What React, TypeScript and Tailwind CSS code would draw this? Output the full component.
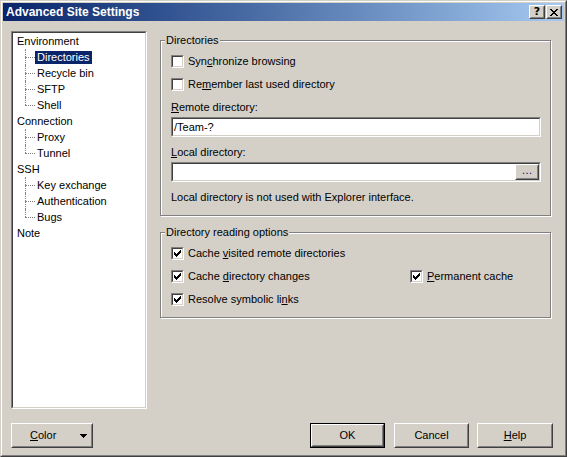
import type { ReactNode } from 'react';

const raised = 'border border-t-white border-l-white border-r-[#404040] border-b-[#404040]';
const raisedInner = 'border border-t-[#d4d0c8] border-l-[#d4d0c8] border-r-[#808080] border-b-[#808080]';
const sunken = 'border border-t-[#808080] border-l-[#808080] border-r-white border-b-white';
const sunkenInner = 'border border-t-[#404040] border-l-[#404040] border-r-[#d4d0c8] border-b-[#d4d0c8]';

const tree = [
  { label: 'Environment', children: ['Directories', 'Recycle bin', 'SFTP', 'Shell'] },
  { label: 'Connection', children: ['Proxy', 'Tunnel'] },
  { label: 'SSH', children: ['Key exchange', 'Authentication', 'Bugs'] },
  { label: 'Note', children: [] as string[] },
];

function Check({ checked }: { checked?: boolean }) {
  return (
    <span className={`${sunken} block w-[13px] h-[13px] shrink-0`}>
      <span className={`${sunkenInner} block w-full h-full bg-white`}>
        {checked && (
          <svg width="9" height="9" viewBox="0 0 9 9" shapeRendering="crispEdges" className="block">
            <path
              fill="#000"
              d="M7 1h1v1h-1z M6 2h2v1h-2z M1 3h1v1h-1z M5 3h3v1h-3z M1 4h2v1h-2z M4 4h3v1h-3z M1 5h5v1h-5z M2 6h3v1h-3z M3 7h1v1h-1z"
            />
          </svg>
        )}
      </span>
    </span>
  );
}

function CheckRow({ checked, children }: { checked?: boolean; children: ReactNode }) {
  return (
    <div className="h-[23px] flex items-center gap-[4px]">
      <Check checked={checked} />
      <span>{children}</span>
    </div>
  );
}

function Group({ title, className, children }: { title: string; className: string; children: ReactNode }) {
  return (
    <div
      className={`relative w-[391px] border border-[#808080] shadow-[inset_1px_1px_0_white,1px_1px_0_white] pl-[10px] pr-[9px] pt-[9px] ${className}`}
    >
      <span className="absolute -top-[7px] left-[4px] px-[1px] bg-[#d4d0c8]">{title}</span>
      {children}
    </div>
  );
}

function Button({ children, className, isDefault }: { children: ReactNode; className: string; isDefault?: boolean }) {
  const body = (
    <div className={`${raised} h-full`}>
      <div className={`${raisedInner} h-full flex items-center justify-center`}>{children}</div>
    </div>
  );
  if (isDefault) {
    return <div className={`border border-black h-[25px] ${className}`}>{body}</div>;
  }
  return <div className={`h-[25px] ${className}`}>{body}</div>;
}

function TitleButton({ children }: { children: ReactNode }) {
  return (
    <div className={`${raised} w-[16px] h-[14px] bg-[#d4d0c8]`}>
      <div className={`${raisedInner} h-full flex items-center justify-center`}>{children}</div>
    </div>
  );
}

function Tree() {
  return (
    <div className={`${sunken} w-[136px] h-[378px] mt-[10px] ml-[8px]`}>
      <div className={`${sunkenInner} h-full bg-white`}>
        {tree.map((node) => (
          <div key={node.label}>
            <div className="h-[16px] flex items-center pl-[4px]">{node.label}</div>
            {node.children.map((child, i) => {
              const last = i === node.children.length - 1;
              const selected = child === 'Directories';
              return (
                <div key={child} className="h-[16px] flex items-center">
                  <div className="w-[12px]" />
                  <div className="w-[10px] h-full flex flex-col">
                    <div className="h-[8px] border-l border-dotted border-[#808080]" />
                    <div
                      className={`h-[8px] border-t border-dotted border-[#808080] ${last ? '' : 'border-l'}`}
                    />
                  </div>
                  <span
                    className={`px-[2px] h-[13px] leading-[13px] ${selected ? 'bg-[#0a246a] text-white' : ''}`}
                  >
                    {child}
                  </span>
                </div>
              );
            })}
          </div>
        ))}
      </div>
    </div>
  );
}

export default function App() {
  return (
    <div className="w-[567px] h-[457px] font-['Liberation_Sans',Arial,sans-serif] text-[11px] leading-[13px] text-black bg-[#d4d0c8] border border-t-[#d4d0c8] border-l-[#d4d0c8] border-r-[#404040] border-b-[#404040]">
      <div className="h-full border border-t-white border-l-white border-r-[#808080] border-b-[#808080] p-px flex flex-col">
        <div className="h-[18px] shrink-0 bg-linear-to-r from-[#0a246a] to-[#a6caf0] flex items-center pl-[3px] pr-[2px]">
          <span className="text-white font-bold text-[12px]">Advanced Site Settings</span>
          <div className="ml-auto flex gap-[1px]">
            <TitleButton>
              <span className="font-bold text-[11px] leading-[10px] font-['DejaVu_Sans',sans-serif]">?</span>
            </TitleButton>
            <TitleButton>
              <svg width="8" height="7" viewBox="0 0 8 7" shapeRendering="crispEdges" className="block">
                <path
                  fill="#000"
                  d="M0 0h2v1h-2z M6 0h2v1h-2z M1 1h2v1h-2z M5 1h2v1h-2z M2 2h4v1h-4z M3 3h2v1h-2z M2 4h4v1h-4z M1 5h2v1h-2z M5 5h2v1h-2z M0 6h2v1h-2z M6 6h2v1h-2z"
                />
              </svg>
            </TitleButton>
          </div>
        </div>

        <div className="flex items-start">
          <Tree />
          <div className="ml-[13px] mt-[19px] flex flex-col">
            <Group title="Directories" className="h-[176px]">
              <CheckRow>
                Syn<u>c</u>hronize browsing
              </CheckRow>
              <CheckRow>
                Re<u>m</u>ember last used directory
              </CheckRow>
              <div className="mt-[4px] h-[14px] flex items-center">
                <span>
                  <u>R</u>emote directory:
                </span>
              </div>
              <div className={`${sunken} mt-[3px] w-[370px] h-[20px]`}>
                <div className={`${sunkenInner} h-full bg-white flex items-center pl-[1px]`}>/Team-?</div>
              </div>
              <div className="mt-[8px] h-[14px] flex items-center">
                <span>
                  <u>L</u>ocal directory:
                </span>
              </div>
              <div className={`${sunken} mt-[3px] w-[370px] h-[20px]`}>
                <div className={`${sunkenInner} h-full bg-white flex justify-end`}>
                  <div className={`${raised} w-[24px] h-full bg-[#d4d0c8]`}>
                    <div className={`${raisedInner} h-full flex items-end justify-center pb-[1px] text-[#000080]`}>
                      …
                    </div>
                  </div>
                </div>
              </div>
              <div className="mt-[8px] h-[14px] flex items-center">Local directory is not used with Explorer interface.</div>
            </Group>

            <Group title="Directory reading options" className="h-[86px] mt-[16px]">
              <CheckRow checked>
                Cache <u>v</u>isited remote directories
              </CheckRow>
              <div className="flex">
                <div className="w-[239px]">
                  <CheckRow checked>
                    Cache <u>d</u>irectory changes
                  </CheckRow>
                </div>
                <CheckRow checked>
                  <u>P</u>ermanent cache
                </CheckRow>
              </div>
              <CheckRow checked>
                Resolve symbolic li<u>n</u>ks
              </CheckRow>
            </Group>
          </div>
        </div>

        <div className="mt-[14px] flex items-center pl-[8px] pr-[11px]">
          <div className={`${raised} w-[82px] h-[25px]`}>
            <div className={`${raisedInner} h-full flex items-center pl-[17px] pr-[4px]`}>
              <span>
                <u>C</u>olor
              </span>
              <svg width="7" height="4" viewBox="0 0 7 4" className="ml-auto block" shapeRendering="crispEdges">
                <path fill="#000" d="M0 0h7v1h-7z M1 1h5v1h-5z M2 2h3v1h-3z M3 3h1v1h-1z" />
              </svg>
            </div>
          </div>
          <Button isDefault className="ml-auto w-[75px]">
            OK
          </Button>
          <Button className="ml-[9px] w-[75px]">Cancel</Button>
          <Button className="ml-[8px] w-[76px]">
            <span>
              <u>H</u>elp
            </span>
          </Button>
        </div>
      </div>
    </div>
  );
}
